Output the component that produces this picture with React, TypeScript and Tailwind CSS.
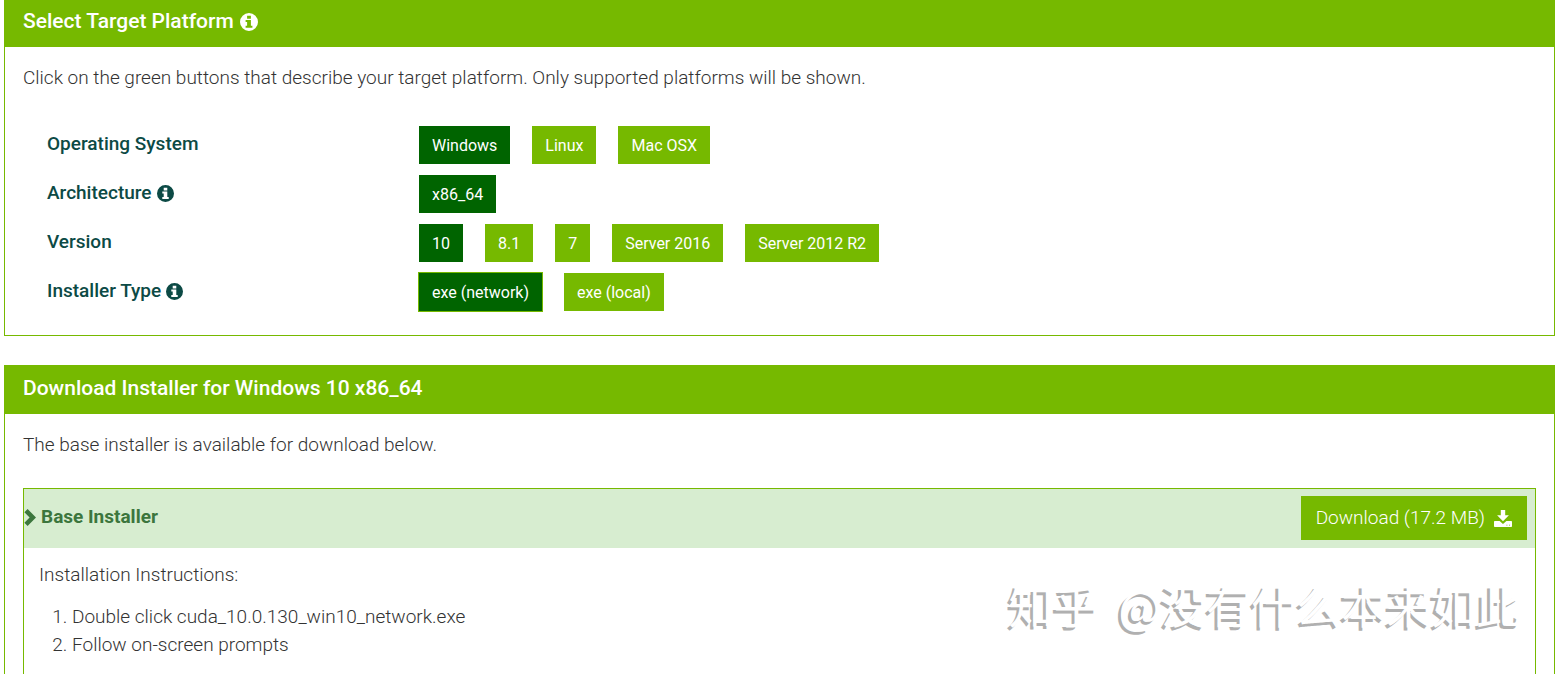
import { useState } from "react";

const OPTIONS = [
  { label: "Operating System", info: false, values: ["Windows", "Linux", "Mac OSX"] },
  { label: "Architecture", info: true, values: ["x86_64"] },
  { label: "Version", info: false, values: ["10", "8.1", "7", "Server 2016", "Server 2012 R2"] },
  { label: "Installer Type", info: true, values: ["exe (network)", "exe (local)"] },
];

function InfoIcon({ className }: { className: string }) {
  return (
    <svg viewBox="0 0 18 18" fill="currentColor" className={className} aria-hidden="true">
      <path
        fillRule="evenodd"
        d="M9 0a9 9 0 1 1 0 18A9 9 0 0 1 9 0zM7.1 2.8v3h3.8v-3zM5.6 7v1.9h1.5v3.9H5.6v2h6.8v-2h-1.5V7z"
      />
    </svg>
  );
}

function ChevronIcon() {
  return (
    <svg viewBox="0 0 12 17" fill="currentColor" className="h-[17px] w-3" aria-hidden="true">
      <path d="M.4 3.3 3.6.1l8.4 8.4-8.4 8.4L.4 13.7l5.2-5.2z" />
    </svg>
  );
}

function DownloadIcon() {
  return (
    <svg viewBox="0 0 18 17" fill="currentColor" className="h-[17px] w-[18px]" aria-hidden="true">
      <path d="M6.8 0h4.4v5.2h3.7L9 11.3 3.1 5.2h3.7z" />
      <path
        fillRule="evenodd"
        d="M.8 11h4.8L9 14l3.4-3h4.8a.8.8 0 0 1 .8.8v4.4a.8.8 0 0 1-.8.8H.8a.8.8 0 0 1-.8-.8v-4.4a.8.8 0 0 1 .8-.8zm11.6 3.8v.6h1v-.6zm2.6 0v.6h1v-.6z"
      />
    </svg>
  );
}

function OptionRow({ label, info, values }: { label: string; info: boolean; values: string[] }) {
  const [selected, setSelected] = useState(values[0]);
  const id = label.toLowerCase().replace(" ", "-");

  return (
    <div role="group" aria-labelledby={id} className="flex">
      <div id={id} className="flex h-9 w-93 shrink-0 items-center gap-[5px] text-[19px] font-medium text-[#0c4a45]">
        {label}
        {info && <InfoIcon className="size-[17px]" />}
      </div>
      <div className="flex flex-wrap gap-[22px]">
        {values.map((value) => (
          <button
            key={value}
            type="button"
            aria-pressed={value === selected}
            onClick={() => setSelected(value)}
            className={`h-[38px] px-[13px] pt-0.5 text-base font-normal text-white ${
              value === selected ? "bg-[#006400]" : "bg-[#76b900]"
            } ${value === "exe (network)" ? "ring-1 ring-[#76b900]" : ""}`}
          >
            {value}
          </button>
        ))}
      </div>
    </div>
  );
}

export default function App() {
  return (
    <div className="relative h-screen overflow-hidden bg-white pl-1 pr-0.5 font-['Roboto','Noto_Sans_CJK_SC',sans-serif] text-[19px] font-light text-[#333]">
      <section className="border border-t-0 border-[#76b900]">
        <h2 className="flex h-[47px] items-center gap-1.5 bg-[#76b900] px-[18px] pb-1 text-[21px] font-medium text-white">
          Select Target Platform
          <InfoIcon className="size-[18px]" />
        </h2>
        <div className="px-[18px] pt-[17px] pb-6">
          <p className="leading-7">
            Click on the green buttons that describe your target platform. Only supported platforms will be shown.
          </p>
          <div className="mt-[34px] flex flex-col gap-[11px] pl-6">
            {OPTIONS.map((option) => (
              <OptionRow key={option.label} {...option} />
            ))}
          </div>
        </div>
      </section>

      <section className="mt-[29px] border border-[#76b900]">
        <h2 className="flex h-12 items-center bg-[#76b900] px-[18px] pb-0.5 text-[21px] font-medium text-white">
          Download Installer for Windows 10 x86_64
        </h2>
        <div className="px-[18px] pt-[17px] pb-5">
          <p className="leading-7">The base installer is available for download below.</p>
          <div className="mt-[29px] border border-[#76b900]">
            <div className="flex h-[59px] items-center justify-between bg-[#d7edd0] pr-2 pb-px">
              <h3 className="flex items-center gap-[5px] pb-0.5 text-[19px] font-bold text-[#3c763d]">
                <ChevronIcon />
                Base Installer
              </h3>
              <a
                href="#download"
                className="flex h-11 items-center gap-[9px] bg-[#76b900] px-[15px] text-white"
              >
                Download (17.2 MB)
                <DownloadIcon />
              </a>
            </div>
            <div className="px-[15px] pt-[13px] pb-10">
              <p className="leading-7">Installation Instructions:</p>
              <ol className="mt-3.5 list-decimal pl-[33px] leading-7">
                <li>Double click cuda_10.0.130_win10_network.exe</li>
                <li>Follow on-screen prompts</li>
              </ol>
            </div>
          </div>
        </div>
      </section>

      <div className="pointer-events-none absolute right-9 bottom-9 flex gap-5 font-['Noto_Sans_CJK_SC',sans-serif] text-[45px] leading-[66px] font-normal text-white [text-shadow:-3px_3px_0_#b0b0b0]">
        <span>知乎</span>
        <span>@没有什么本来如此</span>
      </div>
    </div>
  );
}
